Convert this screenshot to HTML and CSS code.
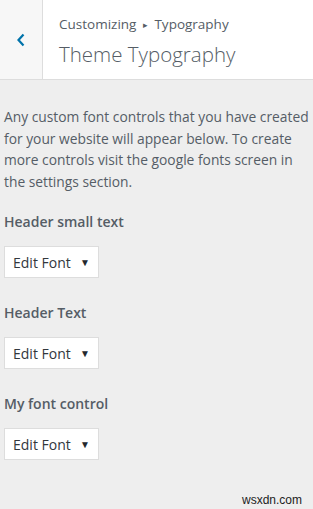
FILE: index.html
```html
<!DOCTYPE html>
<html lang="en">
<head>
    <meta charset="UTF-8">
    <title>Theme Typography</title>
    <link rel="stylesheet" href="styles.css">
</head>
<body>
    <div class="customize-header">
        <button class="back-button" aria-label="Back">
            <svg width="10" height="14" viewBox="0 0 10 14"><path d="M7.5 1.5 L2.5 7 L7.5 12.5" fill="none" stroke="#0073aa" stroke-width="2.2"/></svg>
        </button>
        <div class="header-title">
            <div class="breadcrumb">Customizing <span class="sep">&#9656;</span> Typography</div>
            <h2>Theme Typography</h2>
        </div>
    </div>
    <div class="section-content">
        <p class="description">Any custom font controls that you have created for your website will appear below. To create more controls visit the google fonts screen in the settings section.</p>

        <div class="font-control">
            <h3>Header small text</h3>
            <button class="edit-font">Edit Font <span class="caret">&#9660;</span></button>
        </div>
        <div class="font-control">
            <h3>Header Text</h3>
            <button class="edit-font">Edit Font <span class="caret">&#9660;</span></button>
        </div>
        <div class="font-control">
            <h3>My font control</h3>
            <button class="edit-font">Edit Font <span class="caret">&#9660;</span></button>
        </div>
    </div>
    <div class="watermark">wsxdn.com</div>
</body>
</html>
```

FILE: styles.css
```css
body {
    margin: 0;
    font-family: "Open Sans", "Noto Sans", sans-serif;
    background-color: #eeeeee;
    color: #555d66;
    height: 509px;
    position: relative;
    overflow: hidden;
}
.customize-header {
    display: flex;
    height: 79px;
    background-color: #fff;
    border-bottom: 1px solid #dddddd;
}
.back-button {
    width: 43px;
    padding: 0;
    border: none;
    border-right: 1px solid #dddddd;
    background-color: #f7f7f7;
    display: flex;
    align-items: center;
    justify-content: center;
}
.header-title {
    padding: 14px 0 0 16px;
}
.breadcrumb {
    font-size: 13.5px;
    line-height: 20px;
    color: #555d66;
}
.breadcrumb .sep {
    font-size: 9px;
    vertical-align: 1px;
    margin: 0 3px;
}
.header-title h2 {
    margin: 6px 0 0;
    font-size: 20.5px;
    font-weight: 300;
    line-height: 26px;
    color: #555d66;
}
.section-content {
    padding: 26px 0 0 4px;
}
.description {
    margin: 0;
    font-size: 13.8px;
    line-height: 21.5px;
}
.font-control {
    margin-top: 20px;
}
.font-control + .font-control {
    margin-top: 25px;
}
.font-control h3 {
    margin: 0 0 14px;
    font-size: 14px;
    font-weight: 600;
    line-height: 20px;
}
.edit-font {
    font-family: inherit;
    font-size: 14px;
    color: #32373c;
    background-color: #fff;
    border: 1px solid #dddddd;
    height: 32px;
    width: 95px;
    padding: 0 8px;
    text-align: left;
    display: flex;
    align-items: center;
    justify-content: space-between;
}
.caret {
    font-size: 10px;
    color: #23282d;
}
.watermark {
    position: absolute;
    right: 11px;
    bottom: 2px;
    font-family: "Liberation Sans", sans-serif;
    font-size: 12px;
    color: #222;
}
```
